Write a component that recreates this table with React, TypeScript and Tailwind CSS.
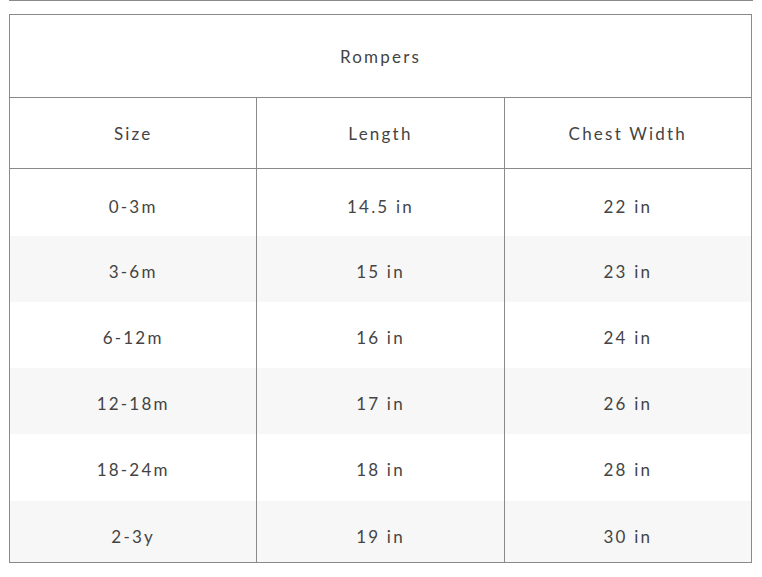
const rows = [
  ["0-3m", "14.5 in", "22 in"],
  ["3-6m", "15 in", "23 in"],
  ["6-12m", "16 in", "24 in"],
  ["12-18m", "17 in", "26 in"],
  ["18-24m", "18 in", "28 in"],
  ["2-3y", "19 in", "30 in"],
];

const heights = ["h-[67px]", "h-[66px]", "h-[66px]", "h-[66px]", "h-[67px]", "h-[62px]"];

export default function App() {
  return (
    <div
      className="w-[762px] h-[577px] bg-white text-[#444] px-[9px]"
      style={{ fontFamily: "Lato, 'Open Sans', sans-serif" }}
    >
      <div className="border-t border-[#8a8a8a] mb-[13px]" />
      <table className="w-[743px] border-collapse table-fixed text-[17px] font-normal tracking-[0.13em]">
        <thead>
          <tr className="h-[83px]">
            <th colSpan={3} className="border border-[#8a8a8a] font-normal text-center pt-[2px]">
              Rompers
            </th>
          </tr>
          <tr className="h-[71px]">
            <th className="w-[248px] border border-[#8a8a8a] font-normal pt-[1px]">Size</th>
            <th className="w-[247px] border border-[#8a8a8a] font-normal pt-[1px]">Length</th>
            <th className="w-[248px] border border-[#8a8a8a] font-normal pt-[1px]">Chest Width</th>
          </tr>
        </thead>
        <tbody>
          {rows.map((r, i) => (
            <tr key={r[0]} className={`${heights[i]} ${i % 2 === 1 ? "bg-[#f7f7f7]" : "bg-white"}`}>
              {r.map((c, j) => (
                <td
                  key={j}
                  className={`text-center align-top ${i === 0 ? "pt-[25px]" : "pt-[23px]"} border-x border-[#8a8a8a] ${i === rows.length - 1 ? "border-b" : ""}`}
                >
                  {c}
                </td>
              ))}
            </tr>
          ))}
        </tbody>
      </table>
    </div>
  );
}
